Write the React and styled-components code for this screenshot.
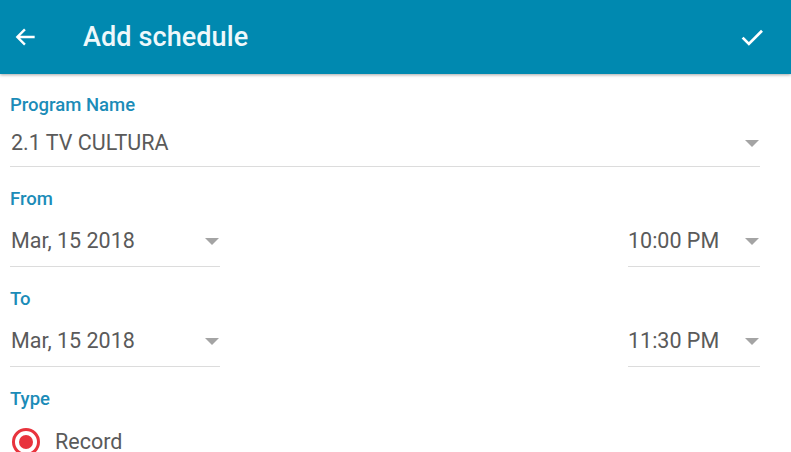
import React from "react";
import styled, { createGlobalStyle } from "styled-components";

const Global = createGlobalStyle`
  body {
    margin: 0;
    background: #ffffff;
    font-family: Roboto, "Liberation Sans", sans-serif;
  }
`;

const Page = styled.div`
  width: 791px;
  height: 452px;
  overflow: hidden;
  background: #ffffff;
`;

const Toolbar = styled.header`
  height: 74px;
  background: #0089b0;
  display: flex;
  align-items: center;
  padding: 0 24px 0 13px;
  box-shadow: 0 1px 3px rgba(0, 0, 0, 0.35);
  position: relative;
`;

const IconButton = styled.button`
  border: 0;
  background: none;
  padding: 0;
  display: flex;
  align-items: center;
  color: #ffffff;
`;

const Title = styled.h1`
  margin: 0 0 0 44px;
  flex: 1;
  font-size: 27px;
  font-weight: 500;
  color: #eef8fb;
  letter-spacing: 0.1px;
`;

const Form = styled.form`
  padding: 0 31px 0 10px;
`;

const Field = styled.div`
  padding-top: ${(p) => (p.first ? "19px" : "20px")};
`;

const Label = styled.label`
  display: block;
  font-size: 18.5px;
  line-height: 24px;
  font-weight: 500;
  color: #1b8cb8;
`;

const Row = styled.div`
  display: flex;
  justify-content: space-between;
`;

const Select = styled.div`
  width: ${(p) => p.width || "100%"};
  display: flex;
  align-items: center;
  justify-content: space-between;
  padding: ${(p) => (p.tight ? "14px 0 11px" : "18px 0 13px")};
  border-bottom: 1px solid #dcdcdc;
  font-size: 21.5px;
  line-height: 24px;
  color: #5a5a5a;
  box-sizing: border-box;
`;

const Value = styled.span`
  padding-left: ${(p) => (p.flush ? "0" : "1px")};
`;

const Caret = styled.span`
  width: 0;
  height: 0;
  border-left: 7px solid transparent;
  border-right: 7px solid transparent;
  border-top: 7px solid #a4a4a4;
  margin-right: 1px;
`;

const RadioRow = styled.div`
  display: flex;
  align-items: center;
  padding-top: 17px;
`;

const Radio = styled.span`
  width: 28px;
  height: 28px;
  margin-left: 2px;
  border: 3px solid #e8333d;
  border-radius: 50%;
  box-sizing: border-box;
  display: flex;
  align-items: center;
  justify-content: center;
  &::after {
    content: "";
    width: 14px;
    height: 14px;
    border-radius: 50%;
    background: #e8333d;
  }
`;

const RadioText = styled.span`
  margin-left: 15px;
  font-size: 21.5px;
  line-height: 24px;
  color: #5a5a5a;
`;

const BackIcon = () => (
  <svg width="26" height="26" viewBox="0 0 24 24" fill="none">
    <path d="M20 12H4M11 5l-7 7 7 7" stroke="#fff" strokeWidth="2.2" />
  </svg>
);

const CheckIcon = () => (
  <svg width="30" height="30" viewBox="0 0 24 24" fill="none">
    <path d="M4.5 12.5l5 5L20 7" stroke="#fff" strokeWidth="2.2" />
  </svg>
);

const DropDown = ({ value, width, tight, flush }) => (
  <Select width={width} tight={tight}>
    <Value flush={flush}>{value}</Value>
    <Caret />
  </Select>
);

const App = () => (
  <Page>
    <Global />
    <Toolbar>
      <IconButton>
        <BackIcon />
      </IconButton>
      <Title>Add schedule</Title>
      <IconButton>
        <CheckIcon />
      </IconButton>
    </Toolbar>
    <Form>
      <Field first>
        <Label>Program Name</Label>
        <DropDown value="2.1 TV CULTURA" tight />
      </Field>
      <Field>
        <Label>From</Label>
        <Row>
          <DropDown value="Mar, 15 2018" width="210px" />
          <DropDown value="10:00 PM" width="132px" flush />
        </Row>
      </Field>
      <Field>
        <Label>To</Label>
        <Row>
          <DropDown value="Mar, 15 2018" width="210px" />
          <DropDown value="11:30 PM" width="132px" flush />
        </Row>
      </Field>
      <Field>
        <Label>Type</Label>
        <RadioRow>
          <Radio />
          <RadioText>Record</RadioText>
        </RadioRow>
      </Field>
    </Form>
  </Page>
);

export default App;
